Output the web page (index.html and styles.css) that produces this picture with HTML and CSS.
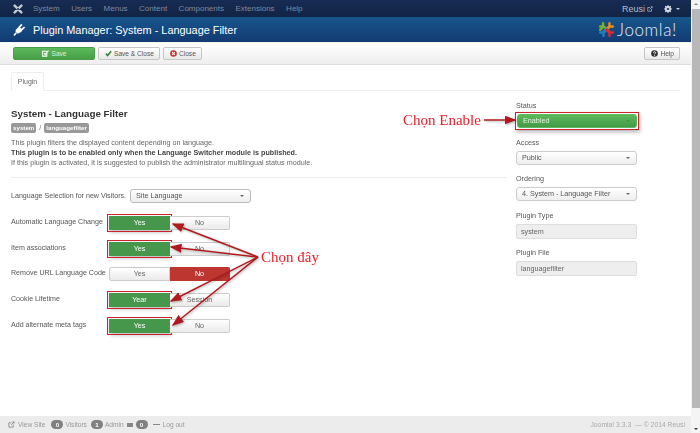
FILE: index.html
```html
<!DOCTYPE html>
<html>
<head>
	<title>Plugin Manager: System - Language Filter</title>
	<link rel="stylesheet" href="styles.css">
</head>
<body>
	<div class="page">
		<div class="navbar">
			<svg class="nav-logo" viewBox="0 0 12 12"><path d="M2 2l8 8M10 2l-8 8" stroke="#c3c9d4" stroke-width="3" stroke-linecap="round"/><circle cx="6" cy="6" r="1.200" fill="#1a2e55"/></svg>
			<span class="nav-item">System</span>
			<span class="nav-item">Users</span>
			<span class="nav-item">Menus</span>
			<span class="nav-item">Content</span>
			<span class="nav-item">Components</span>
			<span class="nav-item">Extensions</span>
			<span class="nav-item">Help</span>
			<span class="nav-user">Reusi
				<svg class="ext-icon" viewBox="0 0 8 8"><path d="M1 2h3M1 2v5h5V4M3.500 4.500L7 1M5 1h2v2" fill="none" stroke="#aab2c0" stroke-width="1"/></svg>
			</span>
			<svg class="nav-gear" viewBox="0 0 10 10"><circle cx="5" cy="5" r="2.800" fill="none" stroke="#d5dae3" stroke-width="2"/><path d="M5 0v10M0 5h10M1.500 1.500l7 7M8.500 1.500l-7 7" stroke="#d5dae3" stroke-width="1.400"/><circle cx="5" cy="5" r="1.300" fill="#14284c"/></svg>
			<span class="nav-caret"></span>
		</div>

		<div class="header">
			<svg class="plug-icon" viewBox="0 0 14 14">
				<path d="M1 13.500L3.500 10.500" fill="none" stroke="#fff" stroke-width="1.600"/>
				<path d="M2.800 7.500L6.500 3.800 10.200 7.500 9 9.500 6.500 11 4.500 11.200 2.800 9.500z" fill="#fff"/>
				<path d="M6.500 5L9.500 1.500M9 7.500L12.500 4.500" fill="none" stroke="#fff" stroke-width="1.800"/>
			</svg>
			<h1>Plugin Manager: System - Language Filter</h1>
			<div class="joomla">
				<svg class="joomla-mark" viewBox="0 0 20 20">
					<g fill="none" stroke-width="2.800" stroke-linecap="round" stroke-linejoin="round">
						<path d="M2.500 6.500L7 6.500 13 12.500" stroke="#7ab02c"/>
						<path d="M6 2.500L6 7 2.500 10.500" stroke="#7ab02c"/>
						<path d="M17.500 6.500L13 6.500 7 12.500" stroke="#f18a1d"/>
						<path d="M13.500 2.500L13.500 7 10 10.500" stroke="#f18a1d"/>
						<path d="M6.500 17.500L6.500 13 10 9.500" stroke="#1c7fc0"/>
						<path d="M2.500 13.500L7 13.500 9 11.500" stroke="#1c7fc0"/>
						<path d="M17.500 13.500L13 13.500 10 10.500" stroke="#e0282e"/>
						<path d="M13.500 17.500L13.500 13 11 10.500" stroke="#e0282e"/>
					</g>
				</svg>
				<span class="joomla-name">Joomla!</span>
			</div>
		</div>

		<div class="toolbar">
			<button class="btn btn-save"><svg class="btn-icon" viewBox="0 0 8 8"><path d="M.5 1.500h5v5.500H.5zM2 3.500l1.500 1.500L7.500.8" fill="none" stroke="#fff" stroke-width="1.200"/></svg>Save</button>
			<button class="btn"><svg class="btn-icon" viewBox="0 0 8 8"><path d="M1 4l2 2.300L7 1.500" fill="none" stroke="#378137" stroke-width="1.800"/></svg>Save &amp; Close</button>
			<button class="btn"><svg class="btn-icon" viewBox="0 0 8 8"><circle cx="4" cy="4" r="3.800" fill="#bd362f"/><path d="M2.500 2.500l3 3M5.500 2.500l-3 3" stroke="#fff" stroke-width="1.200"/></svg>Close</button>
			<button class="btn btn-help"><svg class="btn-icon" viewBox="0 0 8 8"><circle cx="4" cy="4" r="3.800" fill="#333"/><path d="M2.800 3.100c0-1.500 2.500-1.500 2.500 0 0 1-1.300.9-1.300 1.900M4 5.700v.9" fill="none" stroke="#fff" stroke-width="1"/></svg>Help</button>
		</div>

		<div class="content">
			<div class="tabs"><span class="tab">Plugin</span></div>
			<div class="columns">
				<div class="main">
					<h2>System - Language Filter</h2>
					<div class="tags"><span class="tag">system</span> / <span class="tag">languagefilter</span></div>
					<p class="intro">This plugin filters the displayed content depending on language.<br>
					<b>This plugin is to be enabled only when the Language Switcher module is published.</b><br>
					If this plugin is activated, it is suggested to publish the administrator multilingual status module.</p>
					<hr>
					<div class="row row-select">
						<label>Language Selection for new Visitors.</label>
						<div class="select select-wide">Site Language<span class="caret"></span></div>
					</div>
					<div class="row">
						<label>Automatic Language Change</label>
						<div class="toggle"><span class="opt opt-yes marked">Yes</span><span class="opt">No</span></div>
					</div>
					<div class="row">
						<label>Item associations</label>
						<div class="toggle"><span class="opt opt-yes marked">Yes</span><span class="opt">No</span></div>
					</div>
					<div class="row">
						<label>Remove URL Language Code</label>
						<div class="toggle"><span class="opt">Yes</span><span class="opt opt-no">No</span></div>
					</div>
					<div class="row">
						<label>Cookie Lifetime</label>
						<div class="toggle"><span class="opt opt-yes marked">Year</span><span class="opt">Session</span></div>
					</div>
					<div class="row">
						<label>Add alternate meta tags</label>
						<div class="toggle"><span class="opt opt-yes marked">Yes</span><span class="opt">No</span></div>
					</div>
				</div>
				<div class="side">
					<div class="field-label">Status</div>
					<div class="mark-box"><div class="select select-on">Enabled<span class="caret"></span></div></div>
					<div class="field-label">Access</div>
					<div class="select">Public<span class="caret"></span></div>
					<div class="field-label">Ordering</div>
					<div class="select">4. System - Language Filter<span class="caret"></span></div>
					<div class="field-label">Plugin Type</div>
					<div class="readonly">system</div>
					<div class="field-label">Plugin File</div>
					<div class="readonly">languagefilter</div>
				</div>
			</div>
		</div>

		<div class="footer">
			<svg class="foot-icon" viewBox="0 0 8 8"><path d="M1 2h3M1 2v5h5V4M3.500 4.500L7 1M5 1h2v2" fill="none" stroke="#8a8a8a" stroke-width="1"/></svg>
			<span>View Site</span>
			<span class="badge badge-first">0</span><span>Visitors</span>
			<span class="badge">1</span><span>Admin</span>
			<span class="mail"></span><span class="badge">0</span>
			<span class="dash"></span><span>Log out</span>
			<span class="copy">Joomla! 3.3.3 &nbsp;— &copy; 2014 Reusi</span>
		</div>

		<svg class="notes" viewBox="0 0 691 433">
			<defs>
				<marker id="head" markerWidth="8" markerHeight="6" refX="7" refY="3" orient="auto"><path d="M0 0L8 3L0 6z" fill="#b01a1e"/></marker>
			</defs>
			<g stroke="#b01a1e" stroke-width="1.500">
				<path d="M258 257L173 224" marker-end="url(#head)"/>
				<path d="M258 257L171 247" marker-end="url(#head)"/>
				<path d="M258 257L171 301" marker-end="url(#head)"/>
				<path d="M258 257L173 325" marker-end="url(#head)"/>
				<path d="M484 120L515 120" marker-end="url(#head)"/>
			</g>
		</svg>
		<span class="note note-here">Chọn đây</span>
		<span class="note note-enable">Chọn Enable</span>
	</div>

	<div class="scrollbar">
		<span class="arrow-up"></span>
		<div class="thumb"></div>
		<span class="arrow-down"></span>
	</div>
</body>
</html>
```

FILE: styles.css
```css
html, body {
	height: 100%;
}
body {
	margin: 0;
	display: flex;
	overflow: hidden;
	font-family: "Liberation Sans", Arial, sans-serif;
	font-size: 7.2px;
	color: #555;
	background: #fff;
}
/* the reference is a scaled down capture, so everything is a little soft */
.page {
	position: relative;
	flex: 1;
	display: flex;
	flex-direction: column;
	min-width: 0;
	filter: blur(0.3px);
}

/* top bars */
.navbar {
	height: 17px;
	display: flex;
	align-items: center;
	padding-left: 13px;
	background: linear-gradient(#172c54, #122445);
	color: #7f899e;
	font-size: 8px;
}
.nav-logo {
	width: 10px;
	height: 10px;
	margin-right: 10px;
}
.nav-item {
	margin-right: 11.500px;
}
.nav-user {
	margin-left: auto;
	color: #b4bbc8;
	font-size: 9px;
	display: flex;
	align-items: center;
	gap: 2px;
}
.ext-icon {
	width: 6px;
	height: 6px;
}
.nav-gear {
	width: 8px;
	height: 8px;
	margin-left: 11px;
}
.nav-caret {
	margin: 0 11px 0 4px;
	border: 2px solid transparent;
	border-top: 2.500px solid #c5cbd6;
	border-bottom: 0;
}
.header {
	height: 25px;
	display: flex;
	align-items: center;
	padding-left: 13px;
	background: linear-gradient(#17568c, #123b72);
	color: #fff;
}
.plug-icon {
	width: 13px;
	height: 13px;
	margin-right: 7px;
}
h1 {
	margin: 0;
	font-size: 10.900px;
	font-weight: normal;
}
.joomla {
	margin-left: auto;
	display: flex;
	align-items: center;
	margin-right: 14px;
}
.joomla-mark {
	width: 17px;
	height: 17px;
	margin-right: 2px;
}
.joomla-name {
	font-family: Lato, sans-serif;
	font-weight: 300;
	font-size: 17px;
	letter-spacing: 0.600px;
	color: #e6edf5;
}

/* toolbar */
.toolbar {
	height: 23px;
	box-sizing: border-box;
	display: flex;
	align-items: center;
	padding: 0 11px 1px 13px;
	gap: 3px;
	background: linear-gradient(#fff, #eee);
	border-bottom: 1px solid #ddd;
	border-top: 1px solid #f4f4f4;
}
.btn {
	height: 13px;
	padding: 0 5px 0 6px;
	display: flex;
	align-items: center;
	font-family: inherit;
	font-size: 6.600px;
	color: #555;
	background: linear-gradient(#fff, #e8e8e8);
	border: 1px solid #c6c6c6;
	border-radius: 2px;
}
.btn-icon {
	width: 7px;
	height: 7px;
	margin-right: 2px;
}
.btn-save {
	width: 82px;
	justify-content: center;
	color: #dff0d8;
	background: linear-gradient(#5cb85c, #46a146);
	border-color: #4a9c4a;
}
.btn-help {
	margin-left: auto;
}

/* content */
.content {
	flex: 1;
	min-height: 0;
	padding: 7px 11px 0;
}
.tabs {
	height: 19px;
	box-sizing: border-box;
	border-bottom: 1px solid #eee;
}
.tab {
	display: inline-block;
	box-sizing: border-box;
	height: 19px;
	width: 33px;
	line-height: 17px;
	text-align: center;
	font-size: 7px;
	color: #666;
	background: #fff;
	border: 1px solid #eee;
	border-bottom-color: #fff;
	border-radius: 2px 2px 0 0;
}
.columns {
	display: flex;
	gap: 9px;
}
.main {
	width: 496px;
}
h2 {
	margin: 16px 0 0;
	font-size: 9.800px;
	line-height: 13px;
	color: #333;
}
.tags {
	margin-top: 2px;
	height: 11px;
	color: #777;
	display: flex;
	align-items: center;
	gap: 3px;
}
.tag {
	padding: 0 2px;
	height: 10px;
	line-height: 10px;
	font-size: 6.200px;
	font-weight: bold;
	color: #fff;
	background: #999;
	border-radius: 2px;
}
.intro {
	margin: 5px 0 0;
	line-height: 10px;
	color: #666;
}
.intro b {
	color: #444;
}
hr {
	margin: 9px 0 0;
	border: 0;
	border-top: 1px solid #eee;
}
.row {
	display: flex;
	align-items: center;
	height: 14px;
	margin-top: 11.700px;
}
.row-select {
	margin: 11px 0 13px;
}
label {
	width: 98px;
	flex: none;
	padding-bottom: 2px;
	font-size: 7.100px;
	white-space: nowrap;
}
.row-select label {
	width: auto;
	padding: 0;
	margin-right: 4px;
}
.toggle {
	display: flex;
	width: 121px;
	height: 14px;
}
.opt {
	flex: 1;
	box-sizing: border-box;
	text-align: center;
	line-height: 12px;
	color: #666;
	background: linear-gradient(#fff, #eaeaea);
	border: 1px solid #ccc;
}
.opt:first-child {
	border-radius: 2px 0 0 2px;
}
.opt:last-child {
	border-radius: 0 2px 2px 0;
	border-left: 0;
}
.opt-yes {
	color: #fff;
	background: #46964b;
	border-color: #46964b;
}
.opt-no {
	color: #fff;
	background: #bd362f;
	border-color: #bd362f;
}
.marked {
	outline: 1.500px solid #c8242c;
	outline-offset: 1px;
	box-shadow: 1px 2px 4px rgba(0, 0, 0, 0.3);
}
.opt.marked {
	border-radius: 0;
}
.mark-box {
	margin: -2px -2px -2px -1px;
	padding: 1px;
	border: 1px solid #c8242c;
	box-shadow: 1px 2px 4px rgba(0, 0, 0, 0.3);
}
.select {
	position: relative;
	box-sizing: border-box;
	height: 14px;
	line-height: 12px;
	padding-left: 5px;
	color: #555;
	background: linear-gradient(#fff, #eee);
	border: 1px solid #ccc;
	border-radius: 3px;
}
.select-wide {
	width: 121px;
	border-color: #bbb;
}
.select-on {
	color: #e6f3e0;
	background: linear-gradient(#5cb85c, #439a47);
	border-color: #5cb85c;
}
.caret {
	position: absolute;
	right: 6px;
	top: 5px;
	border: 2px solid transparent;
	border-top: 2.500px solid #666;
	border-bottom: 0;
}
.select-on .caret {
	border-top-color: #4a8f4a;
}
.side {
	width: 121px;
	padding-top: 10px;
}
.field-label {
	line-height: 9px;
	margin: 9.500px 0 4px;
	color: #555;
}
.field-label:first-child {
	margin-top: 0;
}
.readonly {
	box-sizing: border-box;
	height: 15px;
	line-height: 13px;
	padding-left: 4px;
	color: #666;
	background: #eee;
	border: 1px solid #ddd;
	border-radius: 2px;
}

/* footer */
.footer {
	height: 17px;
	flex: none;
	display: flex;
	align-items: center;
	padding: 0 6px 0 8px;
	font-size: 6.600px;
	color: #999;
	background: #ececec;
}
.foot-icon {
	width: 7px;
	height: 7px;
	margin-right: 3px;
}
.badge {
	width: 12px;
	height: 9px;
	line-height: 9px;
	margin-right: 2px;
	margin-left: 4px;
	text-align: center;
	font-size: 6.200px;
	font-weight: bold;
	color: #fff;
	background: #808080;
	border-radius: 5px;
}
.badge-first {
	margin-left: 6px;
}
.mail {
	width: 6px;
	height: 4px;
	margin-left: 3px;
	background: #888;
}
.mail + .badge {
	margin-left: 3px;
}
.dash {
	width: 7px;
	height: 1px;
	margin: 0 3px;
	background: #888;
}
.copy {
	margin-left: auto;
	font-size: 6.800px;
	color: #aaa;
}

/* red notes drawn on top of the screenshot */
.notes {
	position: absolute;
	left: 0;
	top: 0;
	width: 691px;
	height: 433px;
	pointer-events: none;
	filter: drop-shadow(1px 1px 1px rgba(0, 0, 0, 0.3));
}
.note {
	position: absolute;
	font-family: "Liberation Serif", serif;
	font-size: 15px;
	color: #e8202c;
	white-space: nowrap;
}
.note-here {
	left: 261px;
	top: 249px;
}
.note-enable {
	left: 403px;
	top: 112px;
}

/* window scrollbar */
.scrollbar {
	width: 9px;
	flex: none;
	display: flex;
	flex-direction: column;
	align-items: center;
	background: #f4f4f4;
}
.thumb {
	flex: 1;
	width: 8px;
	background: #b8b8b8;
}
.arrow-up,
.arrow-down {
	flex: none;
	box-sizing: border-box;
	width: 4px;
	height: 2px;
	border: 2px solid transparent;
	border-top: 0;
	border-bottom: 2px solid #888;
	margin: 3px 0 4px;
}
.arrow-down {
	border-bottom: 0;
	border-top: 2px solid #333;
	margin: 20px 0 3px;
}
```
